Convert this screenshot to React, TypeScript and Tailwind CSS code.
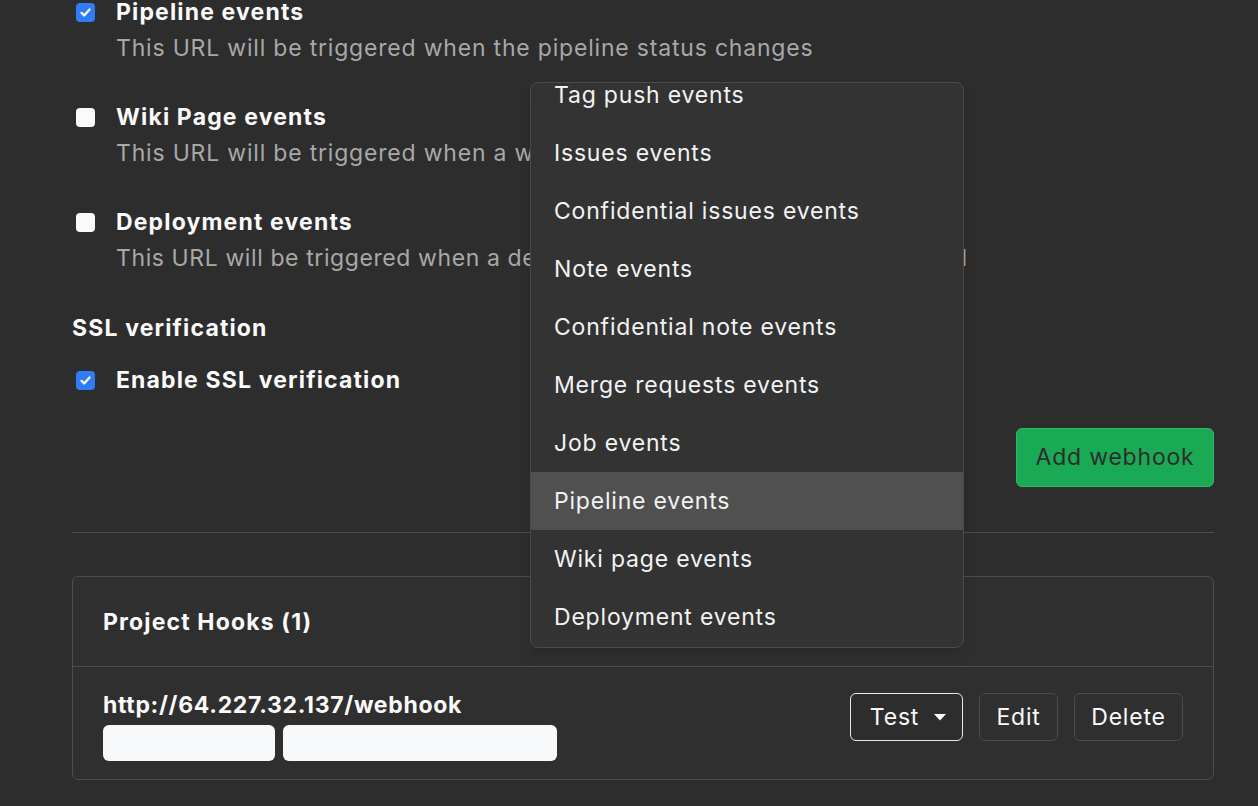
import React from 'react'

const font = { fontFamily: 'Inter, "Noto Sans", sans-serif' }

function Checkbox({ checked }: { checked: boolean }) {
  if (checked) {
    return (
      <span className="flex h-[19px] w-[19px] items-center justify-center rounded-[4px] bg-[#2f7cf6]">
        <svg width="13" height="13" viewBox="0 0 13 13" fill="none">
          <path d="M2.5 6.8 5.2 9.4 10.5 3.4" stroke="#fff" strokeWidth="2.2" strokeLinecap="round" strokeLinejoin="round" />
        </svg>
      </span>
    )
  }
  return <span className="block h-[19px] w-[19px] rounded-[4px] bg-[#fafafa]" />
}

const events = [
  { label: 'Pipeline events', desc: 'This URL will be triggered when the pipeline status changes', checked: true, tight: false },
  { label: 'Wiki Page events', desc: 'This URL will be triggered when a wiki page is created/updated', checked: false, tight: false },
  { label: 'Deployment events', desc: 'This URL will be triggered when a deployment finishes, fails or is canceled', checked: false, tight: true },
]

const menuItems = [
  'Tag push events',
  'Issues events',
  'Confidential issues events',
  'Note events',
  'Confidential note events',
  'Merge requests events',
  'Job events',
  'Pipeline events',
  'Wiki page events',
  'Deployment events',
]

export default function App() {
  return (
    <div className="relative h-[806px] w-[1258px] overflow-hidden bg-[#2d2d2d] text-[23px] tracking-[0.035em]" style={font}>
      <div className="pl-[72px] pr-[44px] pt-0">
        <div className="-mt-[6px] flex flex-col gap-[33px]">
          {events.map(e => (
            <div key={e.label} className="flex">
              <div className="flex h-[36px] w-[44px] items-center pl-[4px]">
                <Checkbox checked={e.checked} />
              </div>
              <div>
                <div className="font-bold leading-[36px] tracking-[0.05em] text-[#fafafa]">{e.label}</div>
                <div className={`leading-[36px] text-[#a8a8a8] ${e.tight ? 'tracking-[0.026em]' : ''}`}>{e.desc}</div>
              </div>
            </div>
          ))}
        </div>

        <div className="mt-[34px] font-bold leading-[36px] tracking-[0.05em] text-[#fafafa]">SSL verification</div>
        <div className="mt-[16px] flex">
          <div className="flex h-[36px] w-[44px] items-center pl-[4px]">
            <Checkbox checked />
          </div>
          <div className="font-bold leading-[36px] tracking-[0.05em] text-[#fafafa]">Enable SSL verification</div>
        </div>

        <div className="mt-[30px] flex justify-end">
          <button className="h-[59px] w-[198px] rounded-[6px] border border-[#2dbb62] bg-[#1aaa55] text-[#2d2d2d]">
            Add webhook
          </button>
        </div>

        <div className="mt-[45px] h-px bg-[#4d4d4d]" />

        <div className="mt-[43px] rounded-[6px] border border-[#4d4d4d] bg-[#2f2f2f]">
          <div className="flex h-[90px] items-center border-b border-[#4d4d4d] px-[30px] pt-[2px] font-bold tracking-[0.05em] text-[#fafafa]">
            Project Hooks (1)
          </div>
          <div className="flex items-start justify-between px-[30px] pb-[18px] pt-[24px]">
            <div>
              <div className="font-bold leading-[28px] tracking-[0.03em] text-[#fafafa]">http://64.227.32.137/webhook</div>
              <div className="mt-[6px] flex gap-[8px]">
                <span className="block h-[36px] w-[172px] rounded-[6px] bg-[#f8f9fb]" />
                <span className="block h-[36px] w-[274px] rounded-[6px] bg-[#f8f9fb]" />
              </div>
            </div>
            <div className="mt-[2px] flex gap-[16px] text-[#fafafa]">
              <button className="flex h-[48px] w-[113px] items-center justify-center gap-[14px] rounded-[6px] border border-[#e8e8e8] bg-[#2d2d2d] pl-[4px]">
                <span>Test</span>
                <svg width="14" height="8" viewBox="0 0 14 8">
                  <path d="M1 1h12L7 7.5z" fill="#fafafa" />
                </svg>
              </button>
              <button className="h-[48px] w-[79px] rounded-[6px] border border-[#4a4a4a] bg-[#2f2f2f]">Edit</button>
              <button className="h-[48px] w-[109px] rounded-[6px] border border-[#4a4a4a] bg-[#2f2f2f]">Delete</button>
            </div>
          </div>
        </div>
      </div>

      <div className="absolute left-[530px] top-[82px] h-[566px] w-[434px] overflow-hidden rounded-[8px] border border-[#4a4a4a] bg-[#333333] shadow-lg">
        <ul className="-mt-[17px]">
          {menuItems.map((item, i) => (
            <li
              key={item}
              className={`flex h-[58px] items-center px-[23px] text-[#f2f2f2] ${i === 7 ? 'bg-[#505050]' : ''}`}
            >
              {item}
            </li>
          ))}
        </ul>
      </div>
    </div>
  )
}
